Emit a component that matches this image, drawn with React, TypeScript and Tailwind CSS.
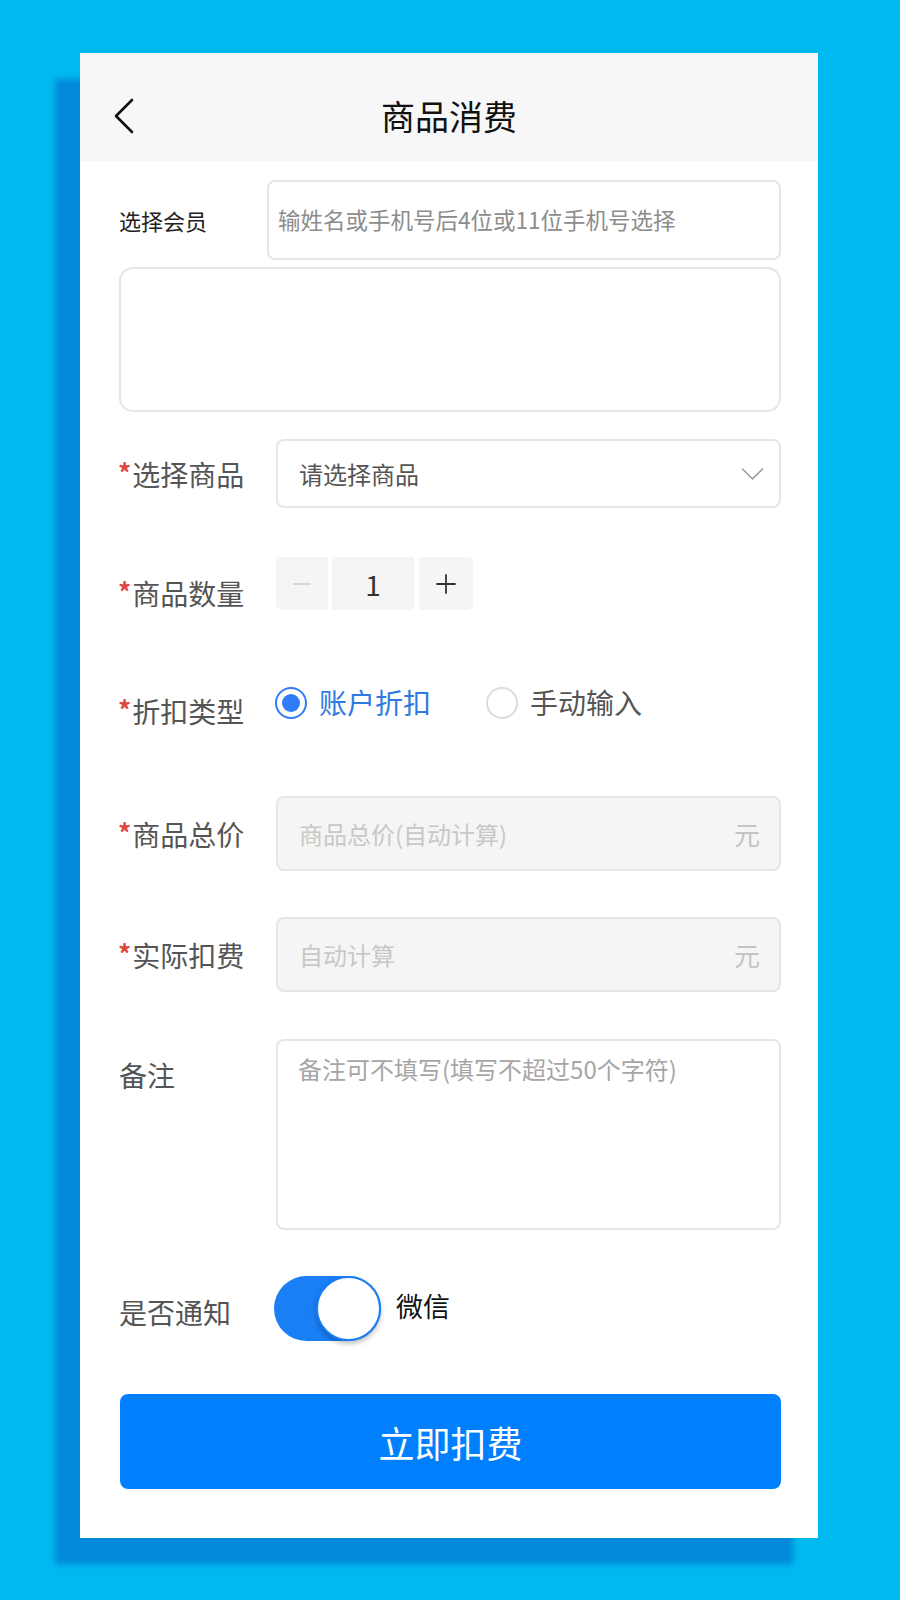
import { useState } from "react";

const font = "font-['Noto_Sans_CJK_SC','Noto_Sans',sans-serif]";

function Label({ text, required, className = "" }: { text: string; required?: boolean; className?: string }) {
    return (
        <div className={`w-[157px] h-[28px] shrink-0 text-[28px] leading-[28px] text-[#555] whitespace-nowrap flex items-center ${className}`}>
            {required && <span className="text-[#e0453f] text-[26px] leading-[28px] font-bold -ml-[1px] mr-[1px] -mt-[4px]">*</span>}
            <span>{text}</span>
        </div>
    );
}

export default function App() {
    const [qty, setQty] = useState(1);
    const [discount, setDiscount] = useState("account");
    const [notify, setNotify] = useState(true);

    return (
        <div className={`min-h-[1600px] w-[900px] bg-[#00b9ef] pt-[53px] pl-[80px] ${font}`}>
            <div className="w-[738px] h-[1485px] bg-white shadow-[-25px_26px_6px_#0289d9] flex flex-col">
                {/* header */}
                <div className="h-[108px] bg-[#f7f7f7] pt-[43px] px-[34px] flex items-start">
                    <svg width="20" height="36" viewBox="0 0 20 36" className="shrink-0 mt-[2px]">
                        <path d="M18 2 L2 18 L18 34" fill="none" stroke="#111" strokeWidth="2.6" strokeLinecap="round" strokeLinejoin="round" />
                    </svg>
                    <div className="flex-1 text-center text-[34px] leading-[40px] text-[#111] -ml-[20px]">商品消费</div>
                </div>

                <div className="pl-[39px] pr-[37px] flex flex-col">
                    {/* member */}
                    <div className="mt-[19px] flex items-center">
                        <div className="w-[148px] shrink-0 text-[22px] leading-[28px] text-[#222]">选择会员</div>
                        <div className="flex-1 h-[80px] border-2 border-[#e6e6e6] rounded-lg flex items-center px-[9px] text-[22.5px] text-[#8c8c8c] whitespace-nowrap">
                            输姓名或手机号后4位或11位手机号选择
                        </div>
                    </div>
                    <div className="mt-[7px] h-[145px] border-2 border-[#e6e6e6] rounded-[14px]" />

                    {/* goods */}
                    <div className="mt-[27px] flex items-center">
                        <Label text="选择商品" required />
                        <div className="flex-1 h-[69px] border-2 border-[#e6e6e6] rounded-lg flex items-center pl-[21px] pr-[15px] text-[24px] text-[#555]">
                            <span className="flex-1">请选择商品</span>
                            <svg width="23" height="14" viewBox="0 0 23 14">
                                <path d="M1.5 2 L11.5 12 L21.5 2" fill="none" stroke="#9a9a9a" strokeWidth="1.6" strokeLinecap="round" strokeLinejoin="round" />
                            </svg>
                        </div>
                    </div>

                    {/* quantity */}
                    <div className="mt-[49px] flex items-start">
                        <Label text="商品数量" required className="mt-[22px]" />
                        <div className="flex items-stretch h-[53px] gap-[4px]">
                            <button
                                className="w-[52px] bg-[#f5f5f5] rounded-l-md flex items-center justify-center"
                                onClick={() => setQty(Math.max(1, qty - 1))}
                            >
                                <svg width="18" height="4" viewBox="0 0 18 4">
                                    <path d="M1 2 H17" stroke="#cccccc" strokeWidth="1.6" strokeLinecap="round" />
                                </svg>
                            </button>
                            <div className="w-[82px] bg-[#f5f5f5] flex items-center justify-center text-[28px] text-[#333]">{qty}</div>
                            <button
                                className="w-[54px] ml-[1px] bg-[#f5f5f5] rounded-r-md flex items-center justify-center"
                                onClick={() => setQty(qty + 1)}
                            >
                                <svg width="20" height="20" viewBox="0 0 20 20">
                                    <path d="M1 10 H19 M10 1 V19" stroke="#333" strokeWidth="1.8" strokeLinecap="round" />
                                </svg>
                            </button>
                        </div>
                    </div>

                    {/* discount type */}
                    <div className="mt-[77px] flex items-start">
                        <Label text="折扣类型" required className="mt-[10px]" />
                        <div className="flex items-center h-[32px] -ml-[1px]">
                            <button className="flex items-center" onClick={() => setDiscount("account")}>
                                <span
                                    className={`w-[32px] h-[32px] rounded-full border-2 flex items-center justify-center ${
                                        discount === "account" ? "border-[#2f7cf6]" : "border-[#dcdcdc]"
                                    }`}
                                >
                                    {discount === "account" && <span className="w-[18px] h-[18px] rounded-full bg-[#2f7cf6]" />}
                                </span>
                                <span
                                    className={`ml-[12px] text-[28px] leading-[28px] -mt-[3px] ${
                                        discount === "account" ? "text-[#2f7ae2]" : "text-[#555]"
                                    }`}
                                >
                                    账户折扣
                                </span>
                            </button>
                            <button className="flex items-center ml-[55px]" onClick={() => setDiscount("manual")}>
                                <span
                                    className={`w-[32px] h-[32px] rounded-full border-2 flex items-center justify-center ${
                                        discount === "manual" ? "border-[#2f7cf6]" : "border-[#dcdcdc]"
                                    }`}
                                >
                                    {discount === "manual" && <span className="w-[18px] h-[18px] rounded-full bg-[#2f7cf6]" />}
                                </span>
                                <span
                                    className={`ml-[12px] text-[28px] leading-[28px] -mt-[3px] ${
                                        discount === "manual" ? "text-[#2f7ae2]" : "text-[#555]"
                                    }`}
                                >
                                    手动输入
                                </span>
                            </button>
                        </div>
                    </div>

                    {/* total price */}
                    <div className="mt-[71px] flex items-center">
                        <Label text="商品总价" required />
                        <div className="flex-1 h-[75px] bg-[#f5f5f5] border-2 border-[#e6e6e6] rounded-lg flex items-center pl-[21px] pr-[19px]">
                            <span className="flex-1 text-[24px] text-[#c8c8c8]">商品总价(自动计算)</span>
                            <span className="text-[26px] text-[#c4c4c4]">元</span>
                        </div>
                    </div>

                    {/* actual charge */}
                    <div className="mt-[46px] flex items-center">
                        <Label text="实际扣费" required />
                        <div className="flex-1 h-[75px] bg-[#f5f5f5] border-2 border-[#e6e6e6] rounded-lg flex items-center pl-[21px] pr-[19px]">
                            <span className="flex-1 text-[24px] text-[#c8c8c8]">自动计算</span>
                            <span className="text-[26px] text-[#c4c4c4]">元</span>
                        </div>
                    </div>

                    {/* remark */}
                    <div className="mt-[47px] flex items-start">
                        <Label text="备注" className="mt-[22px]" />
                        <div className="flex-1 h-[191px] border-2 border-[#e6e6e6] rounded-lg px-[20px] pt-[12px] text-[24px] leading-[32px] text-[#a6a6a6]">
                            备注可不填写(填写不超过50个字符)
                        </div>
                    </div>

                    {/* notify */}
                    <div className="mt-[46px] flex items-start">
                        <Label text="是否通知" className="mt-[22px]" />
                        <button
                            className={`w-[107px] h-[65px] rounded-full flex items-center shrink-0 -ml-[2px] ${
                                notify ? "bg-[#1a7ef5] justify-end" : "bg-[#e5e5e5] justify-start"
                            }`}
                            onClick={() => setNotify(!notify)}
                        >
                            <span className="w-[65px] h-[65px] rounded-full bg-white border-2 border-[#1a7ef5] shadow-[0_3px_5px_rgba(0,0,0,0.25)]" />
                        </button>
                        <div className="ml-[15px] mt-[16px] text-[27px] leading-[28px] text-[#111]">微信</div>
                    </div>

                    {/* submit */}
                    <button className="mt-[53px] ml-[1px] h-[95px] rounded-lg bg-[#0080ff] text-white text-[36px] flex items-center justify-center">
                        立即扣费
                    </button>
                </div>
            </div>
        </div>
    );
}
